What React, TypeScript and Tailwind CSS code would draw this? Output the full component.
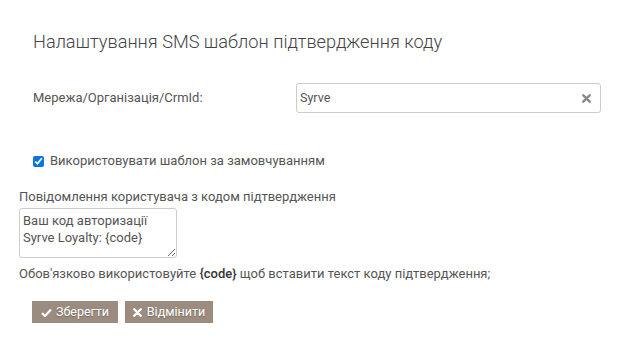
import { useState } from 'react'

const SmsTemplateSettings = () => {
  const [network, setNetwork] = useState('Syrve')
  const [useDefault, setUseDefault] = useState(true)
  const [message, setMessage] = useState('Ваш код авторизації\nSyrve Loyalty: {code}')

  return (
    <div className="min-h-screen w-[620px] bg-white font-['Roboto',sans-serif] text-[#555]">
      {/* Заголовок */}
      <div className="pl-[33px] pt-[30px]">
        <h1 className="text-[18.2px] leading-6 font-light text-[#444]">
          Налаштування SMS шаблон підтвердження коду
        </h1>
      </div>

      {/* Мережа */}
      <div className="flex items-center pl-[33px] pr-[19px] mt-[29px]">
        <label className="w-[263px] text-[13px] text-[#555]">Мережа/Організація/CrmId:</label>
        <div className="flex-1 h-[30px] flex items-center border border-[#ccc] rounded-[3px] pl-[3px] pr-[9px]">
          <input
            value={network}
            onChange={e => setNetwork(e.target.value)}
            className="flex-1 outline-none text-[12.5px] text-[#555] bg-transparent"
          />
          <button onClick={() => setNetwork('')}>
            <svg width="9" height="9" viewBox="0 0 9 9">
              <path d="M1.3 1.3 L7.7 7.7 M7.7 1.3 L1.3 7.7" stroke="#888" strokeWidth="2.4" strokeLinecap="round" />
            </svg>
          </button>
        </div>
      </div>

      {/* Шаблон за замовчуванням */}
      <label className="flex items-center gap-[6px] pl-[33px] mt-[40px] text-[13px] leading-4 text-[#555]">
        <input
          type="checkbox"
          checked={useDefault}
          onChange={e => setUseDefault(e.target.checked)}
          className="w-[11px] h-[11px] m-0 accent-[#0b74de]"
        />
        Використовувати шаблон за замовчуванням
      </label>

      {/* Повідомлення */}
      <div className="pl-[19px] mt-[20px]">
        <div className="text-[13px] leading-4 text-[#555]">Повідомлення користувача з кодом підтвердження</div>
        <textarea
          value={message}
          onChange={e => setMessage(e.target.value)}
          className="block mt-[3px] w-[158px] h-[50px] border border-[#ccc] rounded-[3px] px-[3px] py-[3px] text-[13px] leading-[17px] text-[#555] outline-none resize"
        />
        <div className="mt-[8px] text-[13px] leading-4 text-[#555]">
          Обов'язково використовуйте <span className="text-[#333] font-medium">{'{code}'}</span> щоб вставити текст коду підтвердження;
        </div>
      </div>

      {/* Кнопки */}
      <div className="flex gap-[7px] pl-[32px] mt-[19px]">
        <button className="h-[22px] w-[86px] flex items-center justify-center gap-[4px] bg-[#9b8c7f] text-white text-[12.5px] [text-shadow:0_1px_1px_rgba(0,0,0,0.25)]">
          <svg width="11" height="9" viewBox="0 0 11 9">
            <path d="M1 5 L4 8 L10 1.5" stroke="white" strokeWidth="2.2" fill="none" />
          </svg>
          Зберегти
        </button>
        <button className="h-[22px] w-[88px] flex items-center justify-center gap-[5px] bg-[#9b8c7f] text-white text-[12.5px] [text-shadow:0_1px_1px_rgba(0,0,0,0.25)]">
          <svg width="9" height="9" viewBox="0 0 9 9">
            <path d="M1.2 1.2 L7.8 7.8 M7.8 1.2 L1.2 7.8" stroke="white" strokeWidth="2.3" strokeLinecap="round" />
          </svg>
          Відмінити
        </button>
      </div>
    </div>
  )
}

export default SmsTemplateSettings
